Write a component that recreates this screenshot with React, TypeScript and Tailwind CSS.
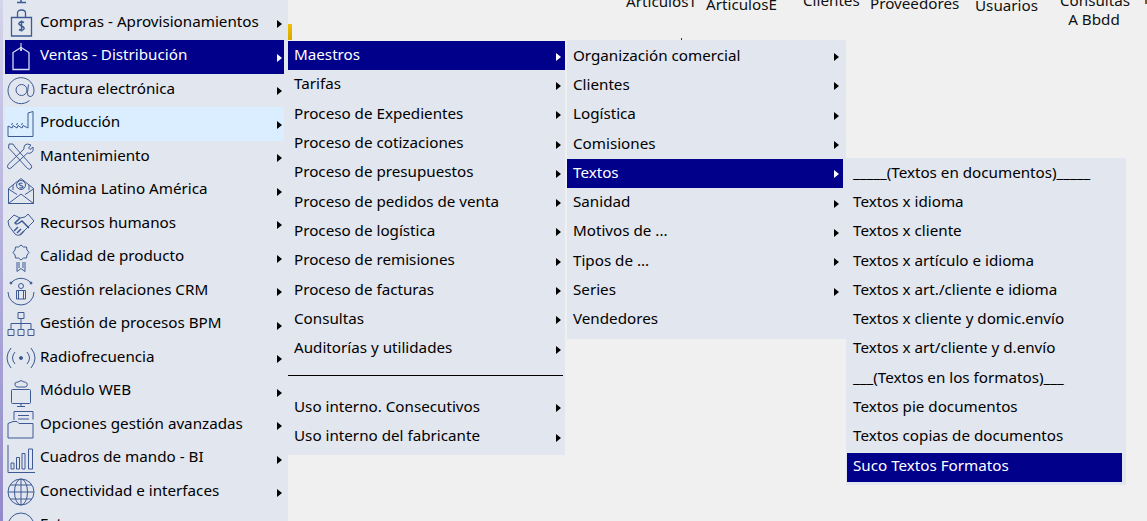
import type { ReactNode } from 'react'

const stroke = '#3d5a94'

function Icon({ children }: { children: ReactNode }) {
  return (
    <svg width="30" height="30" viewBox="0 0 30 30" fill="none" stroke={stroke} strokeWidth="1" className="shrink-0">
      {children}
    </svg>
  )
}

const icons: Record<string, ReactNode> = {
  top: <path d="M11 27.500h9M15 25v3" strokeWidth="1.500" />,
  bag: (
    <>
      <path d="M5.500 9.500h20v18.500h-20z" strokeWidth="1.300" />
      <path d="M11.500 9V5q0-3 4-3t4 3v4" strokeWidth="1.300" />
      <path d="M18 14.500q-2.500-1.500-4.500 0t2 3.500 2 3.500-4.500 0M15.500 12.500v11" strokeWidth="1.500" />
    </>
  ),
  tag: (
    <>
      <path d="M7 27.500V10.500l8-5 8 5v17z" stroke="#d5dcf0" strokeWidth="1.300" />
      <path d="M15 1v7" stroke="#fff" />
      <circle cx="15" cy="8" r="1" fill="#fff" stroke="none" />
    </>
  ),
  at: (
    <>
      <path d="M23.500 25.500A13 13 0 1 1 28 15q0 6.500-4 6.500-3 0-2.500-4l1-8" />
      <circle cx="15.500" cy="15" r="5.500" />
    </>
  ),
  factory: (
    <>
      <path d="M2 27.500V17l4 2 1-2.500 4 2.500 1-2.500 4 2.500 1-2.500 5 2.500V4l5-1.500v25z" />
      <path d="M5 15.500l2-1M10 15.500l2-1M15 15.500l2-1" />
    </>
  ),
  tools: (
    <>
      <path d="M3 2h4l2 3 16 18q1.500 2 0 3.500t-3.500 0L5.500 9 2.500 6z" />
      <path d="M25 3l-2.500 3 1.500 1.500 3-2.500q1 4-1.500 5.500t-4 .5L5 26q-2 1.500-3 0t0-3.500L18 7q-.5-2 1-4t6 0z" />
    </>
  ),
  mail: (
    <>
      <path d="M2.500 12.500L15 2.500l12.500 10v15h-25zM2.500 27.500L15 18l12.500 9.500M2.500 13L11 18.500M27.500 13L19 18.500M7 9v5M23 9v5" />
      <circle cx="15" cy="9" r="4.500" />
      <path d="M16.500 7.500q-1.500-1-3 0t1.500 2 1.500 2-3 0" strokeWidth="1.200" />
    </>
  ),
  hands: (
    <>
      <path d="M2 12l6-6 6 3 5-1 3-3 6 7-6 6-8 8q-3 1-5-1l-6-8z" />
      <path d="M14 9l-5 5q1 2 4 0l3-2 7 7M11 24l4-4M8 22l4-4M14 26l4-4" strokeWidth="1.500" />
    </>
  ),
  medal: (
    <>
      <path d="M15 2l2.500 2 3 0 .5 3 2 2.500-2 2.500-.5 3-3 0-2.500 2-2.500-2-3 0-.5-3-2-2.500 2-2.500.5-3 3 0z" />
      <path d="M11 19v9.500l4-3 4 3V19M13 19v6M17 19v6" />
    </>
  ),
  crm: (
    <>
      <path d="M5 7A13 13 0 0 1 25 7M28 16a13 13 0 0 1-26 0" />
      <circle cx="15" cy="10" r="2.500" />
      <path d="M10.500 23V14.500h9V23zM12.500 14v9M17.500 14v9" />
      <circle cx="5" cy="7" r="1" fill={stroke} />
      <circle cx="25" cy="7" r="1" fill={stroke} />
    </>
  ),
  org: (
    <path d="M12 2.500h6v6h-6zM15 8.500v5M5 13.500h20M5 13.500v6M15 13.500v6M25 13.500v6M2 19.500h6v6H2zM12 19.500h6v6h-6zM22 19.500h6v6h-6z" />
  ),
  radio: (
    <>
      <circle cx="15" cy="15" r="1.500" fill={stroke} />
      <path d="M9 9q-5 6 0 12M21 9q5 6 0 12M5 5q-8 10 0 20M25 5q8 10 0 20" />
    </>
  ),
  web: (
    <>
      <path d="M11 10q-3-1-2-4 2-1 3-1 3-3 6 0 4 0 3 4-.5 1-2 1z" />
      <path d="M5.500 13.500q0-1 1-1h17q1 0 1 1v12q0 1-1 1h-17q-1 0-1-1zM15 27v2.500M11 29.500h8" />
    </>
  ),
  folder: (
    <>
      <path d="M8 10V1.500h19v8M12 5.500h11M12 9h11" />
      <path d="M2 28V13.500l5-2h4l2 2h14V28z" />
    </>
  ),
  chart: (
    <path d="M2 1v27.500h27M5 25v-6h3v6zM10.500 25V13.500h3V25zM16 25V9.500h3V25zM22.500 25V5h4v20z" />
  ),
  globe: (
    <>
      <circle cx="15" cy="15" r="13" />
      <ellipse cx="15" cy="15" rx="6.500" ry="13" />
      <path d="M15 2v26M2 15h26M4 8h22M4 22h22" />
    </>
  ),
  extras: <circle cx="15" cy="15" r="13" />,
}

const mainItems = [
  { label: '', icon: 'top', noArrow: true },
  { label: 'Compras - Aprovisionamientos', icon: 'bag' },
  { label: 'Ventas - Distribución', icon: 'tag', selected: true },
  { label: 'Factura electrónica', icon: 'at' },
  { label: 'Producción', icon: 'factory', hover: true },
  { label: 'Mantenimiento', icon: 'tools' },
  { label: 'Nómina Latino América', icon: 'mail' },
  { label: 'Recursos humanos', icon: 'hands' },
  { label: 'Calidad de producto', icon: 'medal' },
  { label: 'Gestión relaciones CRM', icon: 'crm' },
  { label: 'Gestión de procesos BPM', icon: 'org' },
  { label: 'Radiofrecuencia', icon: 'radio' },
  { label: 'Módulo WEB', icon: 'web' },
  { label: 'Opciones gestión avanzadas', icon: 'folder' },
  { label: 'Cuadros de mando - BI', icon: 'chart' },
  { label: 'Conectividad e interfaces', icon: 'globe' },
  { label: 'Extras', icon: 'extras' },
]

function Arrow({ white }: { white?: boolean }) {
  return <span className={`mt-[2px] h-0 w-0 border-y-[4.5px] border-l-[5px] border-y-transparent ${white ? 'border-l-white' : 'border-l-black'}`} />
}

function SubItem({ label, selected, arrow = true, lift }: { label: string; selected?: boolean; arrow?: boolean; lift?: boolean }) {
  return (
    <div className={`flex h-[29.3px] items-center justify-between pl-[6px] pr-[4px] ${selected ? 'bg-[#00008b] text-white' : ''}`}>
      <span className={lift ? 'pb-[6px]' : 'pb-[3px]'}>{label}</span>
      {arrow && <Arrow white={selected} />}
    </div>
  )
}

const ventas = [
  'Maestros',
  'Tarifas',
  'Proceso de Expedientes',
  'Proceso de cotizaciones',
  'Proceso de presupuestos',
  'Proceso de pedidos de venta',
  'Proceso de logística',
  'Proceso de remisiones',
  'Proceso de facturas',
  'Consultas',
  'Auditorías y utilidades',
]

const maestros = [
  { label: 'Organización comercial' },
  { label: 'Clientes' },
  { label: 'Logística' },
  { label: 'Comisiones' },
  { label: 'Textos', selected: true },
  { label: 'Sanidad' },
  { label: 'Motivos de ...' },
  { label: 'Tipos de ...' },
  { label: 'Series' },
  { label: 'Vendedores', arrow: false },
]

const textos = [
  '_____(Textos en documentos)_____',
  'Textos x idioma',
  'Textos x cliente',
  'Textos x artículo e idioma',
  'Textos x art./cliente e idioma',
  'Textos x cliente y domic.envío',
  'Textos x art/cliente y d.envío',
  '___(Textos en los formatos)___',
  'Textos pie documentos',
  'Textos copias de documentos',
]

const toolbar = [
  { label: 'ArticulosT', cls: 'w-[66px] mt-[-9px]' },
  { label: 'ArticulosE', cls: 'w-[70px] ml-[14px] mt-[-6px]' },
  { label: 'Clientes', cls: 'w-[55px] ml-[27px] mt-[-10px]' },
  { label: 'Proveedores', cls: 'w-[87px] ml-[12px] mt-[-7px]' },
  { label: 'Usuarios', cls: 'w-[61px] ml-[18px] mt-[-5px]' },
]

export default function App() {
  return (
    <div className="relative h-[521px] w-[1147px] overflow-hidden bg-[#f0f0f0] text-[15.2px] leading-5 text-black [font-family:'Noto_Sans','Liberation_Sans',sans-serif]">
      {/* toolbar behind the menus */}
      <div className="flex pl-[626px] text-[#111]">
        {toolbar.map(t => (
          <div key={t.label} className={`whitespace-nowrap text-center ${t.cls}`}>
            {t.label}
          </div>
        ))}
        <div className="ml-[24px] mt-[-9px] w-[68px] text-center leading-[19px]">
          Consultas
          <br />A Bbdd
        </div>
        <div className="ml-[17px] mt-0 h-[4px] w-[2px] bg-[#7a5a20]" />
      </div>
      <div className="absolute left-[288px] top-[24px] h-[16px] w-[4px] bg-gradient-to-b from-[#f0c000] to-[#d8a800]" />
      <div className="absolute left-[681px] top-[38px] h-[2px] w-px bg-[#223366]" />

      {/* cascading menus */}
      <div className="absolute inset-0 flex items-start">
        <div className="mt-[-27px] flex h-[570px] w-[288px] shrink-0 bg-[#e2e6ef]">
          <div className="h-full w-[3px] bg-gradient-to-b from-[#d8d8ee] to-[#8f86c8]" />
          <div className="ml-[2px] w-[279px]">
            {mainItems.map(m => (
              <div
                key={m.icon}
                className={`flex h-[33.5px] items-center pr-[2px] ${m.selected ? 'bg-[#00008b] text-white' : ''} ${m.hover ? 'bg-[#daeeff]' : ''}`}
              >
                <span className="ml-[2px] mr-[5px] flex w-[28px] justify-center">
                  <Icon>{icons[m.icon]}</Icon>
                </span>
                <span className="flex-1 pb-[5px]">{m.label}</span>
                {!m.noArrow && <Arrow white={m.selected} />}
              </div>
            ))}
          </div>
        </div>

        <div className="mt-[41px] w-[277px] shrink-0 bg-[#e2e6ef] pb-[4px]">
          {ventas.map((v, i) => (
            <SubItem key={v} label={v} selected={i === 0} />
          ))}
          <div className="flex h-[29.3px] items-center pb-[5px]">
            <div className="h-px w-[275px] bg-black" />
          </div>
          <SubItem label="Uso interno. Consecutivos" />
          <SubItem label="Uso interno del fabricante" />
        </div>

        <div className="ml-[2px] mt-[40px] w-[279px] shrink-0 bg-[#e2e6ef] pb-[5px] pr-[3px] pt-[1.5px]">
          {maestros.map(m => (
            <SubItem key={m.label} label={m.label} selected={m.selected} arrow={m.arrow} />
          ))}
        </div>

        <div className="mt-[158px] w-[280px] shrink-0 bg-[#e2e6ef] pb-[3px] pl-[1px] pr-[4px] pt-[2px]">
          {textos.map(t => (
            <SubItem key={t} label={t} arrow={false} lift />
          ))}
          <SubItem label="Suco Textos Formatos" selected arrow={false} lift />
        </div>
      </div>
    </div>
  )
}
